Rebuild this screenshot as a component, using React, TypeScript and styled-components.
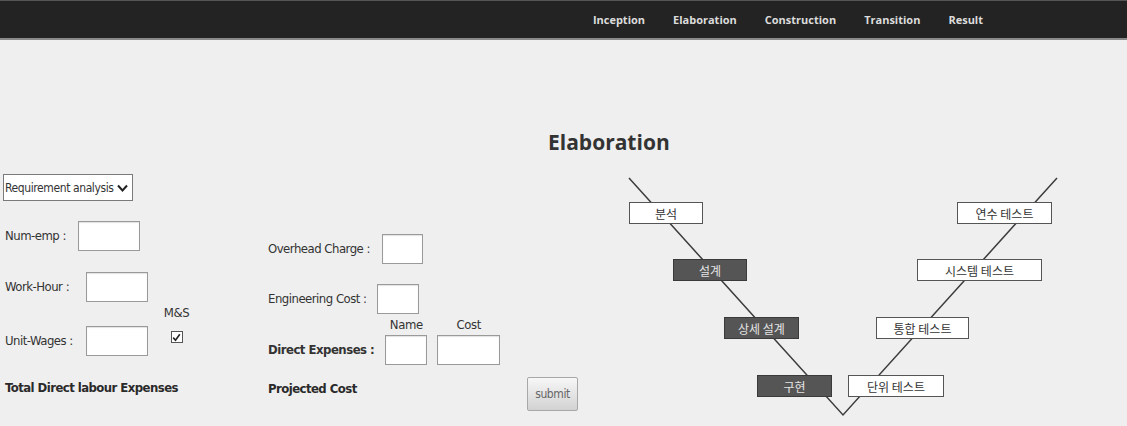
import React from "react";
import styled, { createGlobalStyle } from "styled-components";

const GlobalStyle = createGlobalStyle`
  html, body {
    margin: 0;
    padding: 0;
    background: #efefef;
  }
  body {
    font-family: "DejaVu Sans Condensed", "Liberation Sans", sans-serif;
    color: #2a2a2a;
  }
`;

const Page = styled.div`
  width: 1127px;
  height: 426px;
  overflow: hidden;
  background: #efefef;
`;

const NavBar = styled.nav`
  height: 37px;
  background: #232323;
  border-top: 1px solid #555;
  border-bottom: 2px solid #8a8a8a;
  display: flex;
  align-items: center;
  justify-content: flex-end;
  gap: 28px;
  padding-right: 144px;
`;

const NavLink = styled.a`
  font-family: "Open Sans", "DejaVu Sans", sans-serif;
  font-weight: 700;
  font-size: 11px;
  color: #dcdcdc;
  text-decoration: none;
  cursor: pointer;
`;

const TitleBar = styled.div`
  height: 130px;
  box-sizing: border-box;
  padding: 88px 0 0 548px;
`;

const Title = styled.h2`
  margin: 0;
  font-family: "Open Sans", "DejaVu Sans", sans-serif;
  font-weight: 700;
  font-size: 21px;
  line-height: 28px;
  color: #333;
`;

const Content = styled.div`
  display: flex;
  align-items: flex-start;
`;

const LeftColumn = styled.div`
  width: 266px;
  padding-left: 3px;
  box-sizing: border-box;
  display: flex;
  flex-direction: column;
  align-items: flex-start;
`;

const MidColumn = styled.div`
  width: 312px;
  display: flex;
  flex-direction: column;
`;

const Row = styled.div<{ $top: number; $gap?: number; $align?: string; $spread?: boolean }>`
  display: flex;
  align-items: ${(p) => p.$align ?? "center"};
  justify-content: ${(p) => (p.$spread ? "space-between" : "flex-start")};
  gap: ${(p) => p.$gap ?? 12}px;
  margin-top: ${(p) => p.$top}px;
`;

const Label = styled.label<{ $bold?: boolean; $pad?: number }>`
  font-size: 13px;
  letter-spacing: -0.5px;
  line-height: 18px;
  font-weight: ${(p) => (p.$bold ? 700 : 400)};
  margin-left: 2px;
  margin-bottom: ${(p) => p.$pad ?? 0}px;
  white-space: nowrap;
  color: #333;
`;

const TextInput = styled.input<{ $w: number }>`
  width: ${(p) => p.$w}px;
  height: 30px;
  box-sizing: border-box;
  background: #fff;
  border: 1px solid #9a9a9a;
  box-shadow: inset 0 1px 1px rgba(0, 0, 0, 0.12);
  padding: 2px 4px;
  font: inherit;
`;

const SelectWrap = styled.div`
  position: relative;
  margin-top: 4px;
`;

const Select = styled.select`
  appearance: none;
  width: 130px;
  height: 27px;
  box-sizing: border-box;
  background: #fff;
  border: 1px solid #7a7a7a;
  padding: 0 18px 0 1px;
  font-family: "DejaVu Sans Condensed", sans-serif;
  font-size: 12px;
  letter-spacing: -0.4px;
  color: #333;
`;

const Chevron = styled.svg`
  position: absolute;
  right: 5px;
  top: 10px;
  pointer-events: none;
`;

const CheckGroup = styled.div`
  display: flex;
  flex-direction: column;
  align-items: center;
  align-self: flex-start;
  margin-top: -20px;
  margin-left: 3px;
`;

const SmallCaption = styled.span`
  font-size: 13px;
  letter-spacing: -0.4px;
  line-height: 14px;
  color: #333;
`;

const CheckBox = styled.span`
  margin-top: 11px;
  width: 12px;
  height: 12px;
  box-sizing: border-box;
  border: 1px solid #555;
  background: #fff;
  display: flex;
  align-items: center;
  justify-content: center;
`;

const CellGroup = styled.div`
  display: flex;
  gap: 10px;
`;

const Cell = styled.div`
  display: flex;
  flex-direction: column;
  align-items: center;
  gap: 3px;
`;

const BoldLine = styled.div<{ $top: number }>`
  font-size: 13px;
  letter-spacing: -0.55px;
  font-weight: 700;
  line-height: 18px;
  margin-top: ${(p) => p.$top}px;
  margin-left: 2px;
  white-space: nowrap;
  color: #2a2a2a;
`;

const SubmitButton = styled.button`
  width: 51px;
  height: 34px;
  padding: 0;
  border: 1px solid #a8a8a8;
  border-radius: 2px;
  background: linear-gradient(#f7f7f7, #d2d2d2);
  font-family: "DejaVu Sans Condensed", sans-serif;
  font-size: 12px;
  letter-spacing: -0.4px;
  color: #666;
  cursor: pointer;
`;

const Diagram = styled.div`
  position: relative;
  margin-left: 22px;
  width: 500px;
  height: 256px;
`;

const Lines = styled.svg`
  position: absolute;
  left: 0;
  top: 0;
`;

const Node = styled.div<{ $x: number; $y: number; $w: number; $dark?: boolean }>`
  position: absolute;
  left: ${(p) => p.$x}px;
  top: ${(p) => p.$y}px;
  width: ${(p) => p.$w}px;
  height: 22px;
  box-sizing: border-box;
  border: 1.5px solid ${(p) => (p.$dark ? "#3a3a3a" : "#555")};
  background: ${(p) => (p.$dark ? "#555" : "#fff")};
  color: ${(p) => (p.$dark ? "#e4e4e4" : "#333")};
  font-family: "Noto Sans CJK KR", sans-serif;
  font-size: 12px;
  display: flex;
  align-items: center;
  justify-content: center;
`;

const stages = ["Inception", "Elaboration", "Construction", "Transition", "Result"];

const nodes = [
  { label: "분석", x: 29, y: 32, w: 74 },
  { label: "설계", x: 73, y: 89, w: 74, dark: true },
  { label: "상세 설계", x: 124, y: 147, w: 75, dark: true },
  { label: "구현", x: 157, y: 205, w: 75, dark: true },
  { label: "단위 테스트", x: 248, y: 205, w: 96 },
  { label: "통합 테스트", x: 276, y: 147, w: 93 },
  { label: "시스템 테스트", x: 317, y: 89, w: 125 },
  { label: "연수 테스트", x: 357, y: 32, w: 95 },
];

export default function App() {
  return (
    <Page>
      <GlobalStyle />
      <NavBar>
        {stages.map((s) => (
          <NavLink key={s}>{s}</NavLink>
        ))}
      </NavBar>

      <TitleBar>
        <Title>Elaboration</Title>
      </TitleBar>

      <Content>
        <LeftColumn>
          <SelectWrap>
            <Select defaultValue="req">
              <option value="req">Requirement analysis</option>
              <option value="design">Design</option>
            </Select>
            <Chevron width="11" height="8" viewBox="0 0 11 8">
              <path d="M1 1.5 L5.5 6.5 L10 1.5" fill="none" stroke="#222" strokeWidth="2" />
            </Chevron>
          </SelectWrap>

          <Row $top={20}>
            <Label>Num-emp :</Label>
            <TextInput $w={62} />
          </Row>
          <Row $top={21} $gap={17}>
            <Label>Work-Hour :</Label>
            <TextInput $w={62} />
          </Row>
          <Row $top={24} $gap={13}>
            <Label>Unit-Wages :</Label>
            <TextInput $w={62} />
            <CheckGroup>
              <SmallCaption>M&amp;S</SmallCaption>
              <CheckBox>
                <svg width="9" height="9" viewBox="0 0 9 9">
                  <path d="M1.2 4.6 L3.5 7.2 L7.8 1.2" fill="none" stroke="#222" strokeWidth="1.6" />
                </svg>
              </CheckBox>
            </CheckGroup>
          </Row>
          <BoldLine $top={23}>Total Direct labour Expenses</BoldLine>
        </LeftColumn>

        <MidColumn>
          <Row $top={64}>
            <Label>Overhead Charge :</Label>
            <TextInput $w={41} />
          </Row>
          <Row $top={20} $gap={10}>
            <Label>Engineering Cost :</Label>
            <TextInput $w={42} />
          </Row>
          <Row $top={4} $align="flex-end" $gap={11}>
            <Label $bold $pad={6}>Direct Expenses :</Label>
            <CellGroup>
              <Cell>
                <SmallCaption>Name</SmallCaption>
                <TextInput $w={42} />
              </Cell>
              <Cell>
                <SmallCaption>Cost</SmallCaption>
                <TextInput $w={63} />
              </Cell>
            </CellGroup>
          </Row>
          <Row $top={12} $align="flex-start" $spread>
            <BoldLine $top={3}>Projected Cost</BoldLine>
            <SubmitButton>submit</SubmitButton>
          </Row>
        </MidColumn>

        <Diagram>
          <Lines width="500" height="256" viewBox="0 0 500 256">
            <polyline points="29,8 243,245 457,8" fill="none" stroke="#3c3c3c" strokeWidth="1.5" />
          </Lines>
          {nodes.map((n) => (
            <Node key={n.label} $x={n.x} $y={n.y} $w={n.w} $dark={n.dark}>
              {n.label}
            </Node>
          ))}
        </Diagram>
      </Content>
    </Page>
  );
}
